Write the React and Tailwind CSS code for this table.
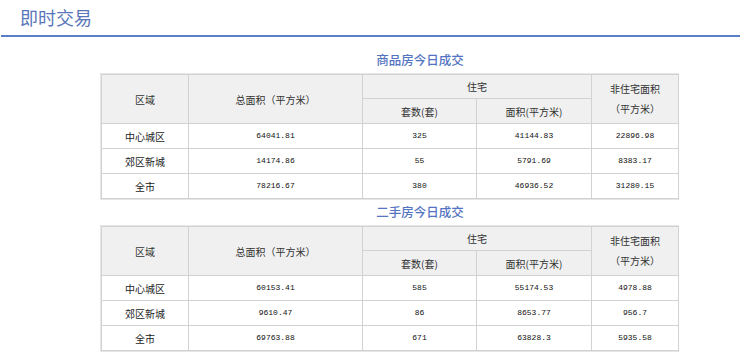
import React from "react";

const cjk = { fontFamily: '"Noto Sans CJK SC", "Noto Sans", sans-serif' };
const mono = { fontFamily: '"Liberation Mono", "DejaVu Sans Mono", monospace' };

function Table({ title, rows }) {
  const th = "border border-[#d2d2d2] bg-[#f0f0f0] text-[10px] font-normal text-[#333] text-center p-0";
  const tdC = "border border-[#d2d2d2] text-[10px] text-[#222] text-center p-0";
  const tdN = "border border-[#d2d2d2] text-[8px] text-[#111] text-center p-0";
  return (
    <div className="flex flex-col">
      <div className="h-[25px] flex items-center justify-center text-[12.5px] font-medium text-[#5474c2]" style={cjk}>
        {title}
      </div>
      <div className="border border-[#e6e6e6] w-[579px]">
        <table className="border-collapse w-[577px] table-fixed" style={cjk}>
          <colgroup>
            <col className="w-[87px]" />
            <col className="w-[174px]" />
            <col className="w-[114px]" />
            <col className="w-[115px]" />
            <col className="w-[87px]" />
          </colgroup>
          <thead>
            <tr className="h-[24px]">
              <th rowSpan={2} className={th}>区域</th>
              <th rowSpan={2} className={th}>总面积（平方米）</th>
              <th colSpan={2} className={th}>住宅</th>
              <th rowSpan={2} className={th + " leading-[20px]"}>
                <div>非住宅面积</div>
                <div>（平方米）</div>
              </th>
            </tr>
            <tr className="h-[25px]">
              <th className={th}>套数(套)</th>
              <th className={th}>面积(平方米)</th>
            </tr>
          </thead>
          <tbody>
            {rows.map((r) => (
              <tr key={r[0]} className="h-[25px]">
                <td className={tdC}>{r[0]}</td>
                <td className={tdN} style={mono}>{r[1]}</td>
                <td className={tdN} style={mono}>{r[2]}</td>
                <td className={tdN} style={mono}>{r[3]}</td>
                <td className={tdN} style={mono}>{r[4]}</td>
              </tr>
            ))}
          </tbody>
        </table>
      </div>
    </div>
  );
}

export default function App() {
  return (
    <div className="w-[740px] h-[359px] bg-white overflow-hidden">
      <div className="h-[35px] pl-[20px] flex items-center text-[18px] text-[#5a76ba]" style={cjk}>
        即时交易
      </div>
      <div className="ml-[1px] h-[2px] bg-[#5b7fc6]" />
      <div className="pl-[100px] pt-[11px]">
        <Table
          title="商品房今日成交"
          rows={[
            ["中心城区", "64041.81", "325", "41144.83", "22896.98"],
            ["郊区新城", "14174.86", "55", "5791.69", "8383.17"],
            ["全市", "78216.67", "380", "46936.52", "31280.15"],
          ]}
        />
        <Table
          title="二手房今日成交"
          rows={[
            ["中心城区", "60153.41", "585", "55174.53", "4978.88"],
            ["郊区新城", "9610.47", "86", "8653.77", "956.7"],
            ["全市", "69763.88", "671", "63828.3", "5935.58"],
          ]}
        />
      </div>
    </div>
  );
}
